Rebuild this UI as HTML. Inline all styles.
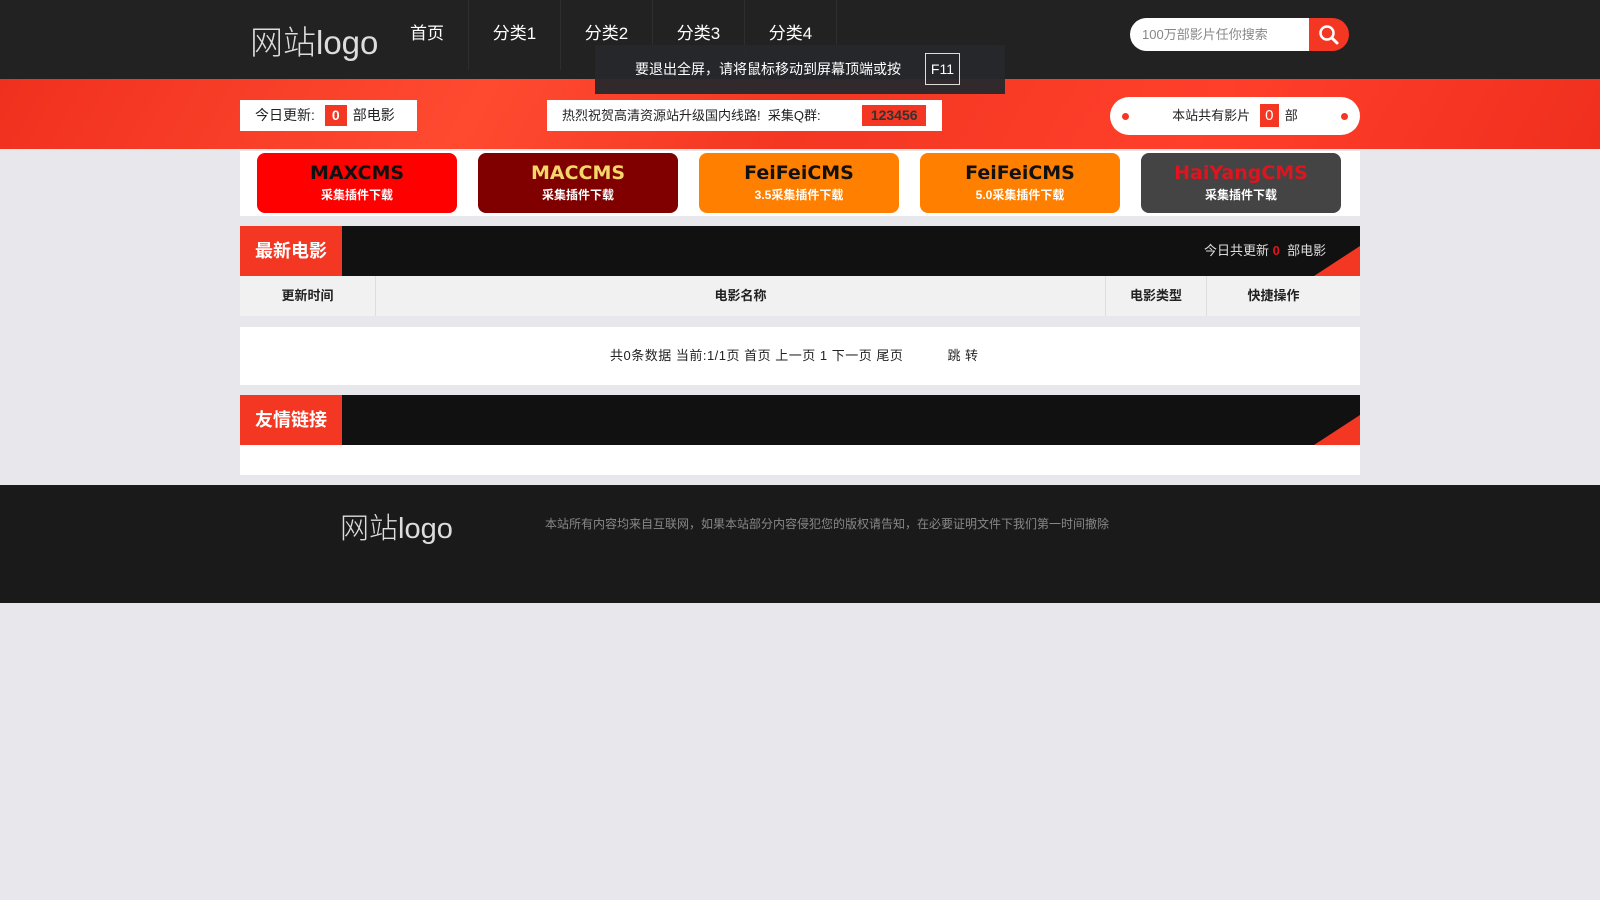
<!DOCTYPE html>
<html><head><meta charset="utf-8"><style>
*{margin:0;padding:0;box-sizing:border-box}
body{width:1600px;height:900px;background:#e8e7ec;font-family:"Liberation Sans","Noto Sans CJK SC",sans-serif;position:relative;overflow:hidden}
.abs{position:absolute}
.hd{left:0;top:0;width:1600px;height:79px;background:#222}
.logo{color:#ddd;font-size:33px;font-weight:300;letter-spacing:0}
.nav{top:0;height:70px;width:92px;border-right:1px solid #2e2e2e;color:#fff;font-size:17px;text-align:center;line-height:68px}
.band{left:0;top:79px;width:1600px;height:70px;background:linear-gradient(120deg,#f0301e 0%,#ff4a30 30%,#f33722 50%,#ff3f2a 75%,#f0301e 100%)}
.box{background:#fff;color:#222;font-size:14px}
.red{background:#f33722;color:#fff;display:inline-block;text-align:center}
.btn{top:153px;width:200px;height:60px;border-radius:8px;text-align:center;color:#fff}
.btn b{display:block;font-size:19px;font-weight:bold;letter-spacing:0;margin-top:9px;line-height:22px;font-family:"DejaVu Sans","Liberation Sans",sans-serif}
.btn span{display:block;font-size:12px;margin-top:2px;font-weight:bold}
.bar{left:240px;width:1120px;height:50px;background:#111}
.tab{width:102px;height:50px;background:#f33722;color:#fff;font-weight:bold;font-size:18px;line-height:50px;text-align:center}
.th{top:276px;height:40px;background:#f1f1f1;font-size:13px;font-weight:bold;color:#222;line-height:40px;text-align:center;border-right:1px solid #ddd}
.corner{width:0;height:0;border-left:46px solid transparent;border-bottom:30px solid #f33722}
</style></head><body>
<div class="abs hd"></div>
<div class="abs logo" style="left:250px;top:16px">网站logo</div>
<div class="abs nav" style="left:385px;border-right:0;width:84px">首页</div>
<div class="abs" style="left:468px;top:0;width:1px;height:70px;background:#2e2e2e"></div>
<div class="abs nav" style="left:469px">分类1</div>
<div class="abs nav" style="left:561px">分类2</div>
<div class="abs nav" style="left:653px">分类3</div>
<div class="abs nav" style="left:745px">分类4</div>
<div class="abs" style="left:1130px;top:18px;width:180px;height:33px;background:#fff;border-radius:17px 0 0 17px;color:#888;font-size:13px;line-height:33px;padding-left:12px">100万部影片任你搜索</div>
<div class="abs" style="left:1309px;top:18px;width:40px;height:33px;background:#f33722;border-radius:0 17px 17px 0">
<svg width="40" height="33" viewBox="0 0 40 33"><circle cx="18" cy="15" r="6.5" fill="none" stroke="#fff" stroke-width="2.5"/><line x1="23" y1="20" x2="28" y2="25" stroke="#fff" stroke-width="3" stroke-linecap="round"/></svg></div>
<div class="abs band"></div>
<div class="abs box" style="left:240px;top:100px;width:177px;height:31px;line-height:31px;padding-left:15px">今日更新: <span class="red" style="width:22px;height:21px;line-height:21px;font-weight:bold;margin:0 6px">0</span>部电影</div>
<div class="abs box" style="left:547px;top:100px;width:395px;height:31px;line-height:31px;padding-left:15px;font-size:13px">热烈祝贺高清资源站升级国内线路!&nbsp; 采集Q群: <span class="red" style="width:64px;height:21px;line-height:21px;font-weight:bold;margin-left:38px;color:#333;font-size:14px">123456</span></div>
<div class="abs box" style="left:1110px;top:97px;width:250px;height:38px;border-radius:19px;line-height:38px;text-align:center;font-size:13px">
<span class="abs" style="left:12px;top:16px;width:7px;height:7px;border-radius:50%;background:#f33722"></span>
本站共有影片 <span class="red" style="width:19px;height:23px;line-height:23px;font-size:15px;margin:0 6px">0</span>部
<span class="abs" style="right:12px;top:16px;width:7px;height:7px;border-radius:50%;background:#f33722"></span></div>
<div class="abs" style="left:595px;top:45px;width:410px;height:49px;background:rgba(38,40,44,.95);color:#fff;font-size:14px;line-height:49px;padding-left:40px">要退出全屏，请将鼠标移动到屏幕顶端或按 <span style="display:inline-block;border:1px solid #ddd;padding:0 5px;line-height:30px;margin-left:20px">F11</span></div>
<div class="abs" style="left:240px;top:151px;width:1120px;height:65px;background:#fff"></div>
<div class="abs btn" style="left:257px;background:#ff0000"><b style="color:#111">MAXCMS</b><span>采集插件下载</span></div>
<div class="abs btn" style="left:478px;background:#800000"><b style="color:#f5d66a">MACCMS</b><span>采集插件下载</span></div>
<div class="abs btn" style="left:699px;background:#ff8000"><b style="color:#111">FeiFeiCMS</b><span>3.5采集插件下载</span></div>
<div class="abs btn" style="left:920px;background:#ff8000"><b style="color:#111">FeiFeiCMS</b><span>5.0采集插件下载</span></div>
<div class="abs btn" style="left:1141px;background:#444"><b style="color:#e0141e">HaiYangCMS</b><span>采集插件下载</span></div>
<div class="abs bar" style="top:226px"></div>
<div class="abs tab" style="left:240px;top:226px">最新电影</div>
<div class="abs" style="left:1204px;top:226px;color:#ddd;font-size:13px;line-height:50px">今日共更新 <b style="color:#e0141e">0</b>&nbsp; 部电影</div>
<div class="abs corner" style="left:1314px;top:246px"></div>
<div class="abs th" style="left:240px;width:136px">更新时间</div>
<div class="abs th" style="left:376px;width:730px">电影名称</div>
<div class="abs th" style="left:1106px;width:101px">电影类型</div>
<div class="abs th" style="left:1207px;width:153px;border-right:0;padding-right:20px">快捷操作</div>
<div class="abs" style="left:240px;top:327px;width:1120px;height:58px;background:#fff;font-size:13px;color:#222;line-height:58px;padding-left:370px;letter-spacing:0.5px">共0条数据 当前:1/1页 首页 上一页 1 下一页 尾页 <span style="margin-left:40px">跳 转</span></div>
<div class="abs bar" style="top:395px"></div>
<div class="abs tab" style="left:240px;top:395px">友情链接</div>
<div class="abs corner" style="left:1314px;top:415px"></div>
<div class="abs" style="left:240px;top:445px;width:1120px;height:30px;background:#fff"></div>
<div class="abs" style="left:0;top:485px;width:1600px;height:118px;background:#1a1a1a"></div>
<div class="abs logo" style="left:340px;top:505px;font-size:29px">网站logo</div>
<div class="abs" style="left:545px;top:515px;color:#888;font-size:12px">本站所有内容均来自互联网，如果本站部分内容侵犯您的版权请告知，在必要证明文件下我们第一时间撤除</div>
</body></html>
